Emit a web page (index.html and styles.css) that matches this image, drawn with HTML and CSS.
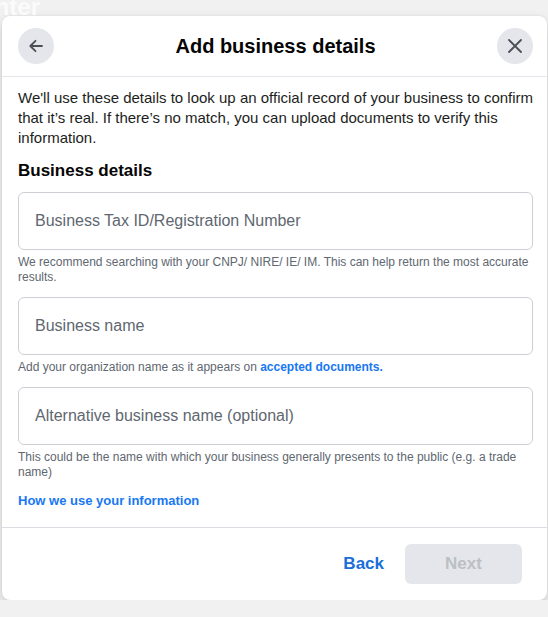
FILE: index.html
```html
<!DOCTYPE html>
<html lang="en">
<head>
    <meta charset="UTF-8">
    <meta name="viewport" content="width=device-width, initial-scale=1.0">
    <title>Add business details</title>
    <link rel="stylesheet" href="styles.css">
</head>
<body>
    <div class="backdrop-title">Center</div>

    <div class="dialog">
        <div class="dialog-header">
            <button class="icon-button" aria-label="Back">
                <svg width="20" height="20" viewBox="0 0 20 20">
                    <path d="M16 10H4.5M9.5 4.8L4.3 10l5.2 5.2" fill="none" stroke="#4b4f56" stroke-width="1.8" stroke-linecap="round" stroke-linejoin="round"/>
                </svg>
            </button>
            <h1>Add business details</h1>
            <button class="icon-button" aria-label="Close">
                <svg width="20" height="20" viewBox="0 0 20 20">
                    <path d="M4 4l12 12M16 4L4 16" fill="none" stroke="#4b4f56" stroke-width="1.8" stroke-linecap="round"/>
                </svg>
            </button>
        </div>

        <div class="dialog-body">
            <p class="intro">We'll use these details to look up an official record of your business to confirm that it’s real. If there’s no match, you can upload documents to verify this information.</p>

            <h2>Business details</h2>

            <div class="field">
                <input class="text-input" type="text" placeholder="Business Tax ID/Registration Number">
                <p class="hint">We recommend searching with your CNPJ/ NIRE/ IE/ IM. This can help return the most accurate results.</p>
            </div>

            <div class="field">
                <input class="text-input" type="text" placeholder="Business name">
                <p class="hint">Add your organization name as it appears on <a href="#" class="link">accepted documents.</a></p>
            </div>

            <div class="field">
                <input class="text-input" type="text" placeholder="Alternative business name (optional)">
                <p class="hint">This could be the name with which your business generally presents to the public (e.g. a trade name)</p>
            </div>

            <a href="#" class="link info-link">How we use your information</a>
        </div>

        <div class="dialog-footer">
            <button class="text-button">Back</button>
            <button class="primary-button" disabled>Next</button>
        </div>
    </div>
</body>
</html>
```

FILE: styles.css
```css
body {
    margin: 0;
    font-family: "Liberation Sans", Arial, Helvetica, sans-serif;
    background-color: #f1f1f1;
    color: #1c1e21;
    overflow: hidden;
}
.backdrop-title {
    height: 16px;
    line-height: 14px;
    font-size: 24px;
    font-weight: bold;
    color: #fbfbfb;
    text-indent: -36px;
    overflow: hidden;
}
.dialog {
    margin-left: 2px;
    width: 545px;
    background-color: white;
    border-radius: 8px;
    box-shadow: 0 6px 14px rgba(0, 0, 0, 0.15), 0 0 2px rgba(0, 0, 0, 0.1);
}
.dialog-header {
    display: flex;
    align-items: center;
    justify-content: space-between;
    height: 60px;
    padding: 0 14px 0 16px;
    border-bottom: 1px solid #e4e6eb;
}
.dialog-header h1 {
    margin: 0;
    font-size: 20px;
    font-weight: bold;
    color: #050505;
}
.icon-button {
    display: flex;
    align-items: center;
    justify-content: center;
    width: 36px;
    height: 36px;
    padding: 0;
    border: none;
    border-radius: 50%;
    background-color: #e4e6eb;
    cursor: pointer;
}
.dialog-body {
    padding: 11px 14px 18px 16px;
}
.intro {
    margin: 0 -6px 0 0;
    font-size: 15px;
    line-height: 20px;
    color: #1c1e21;
}
.dialog-body h2 {
    margin: 12px 0 10px;
    font-size: 17px;
    line-height: 22px;
    font-weight: bold;
    color: #050505;
}
.field {
    margin-bottom: 12px;
}
.field:last-of-type {
    margin-bottom: 11px;
}
.text-input {
    display: block;
    box-sizing: border-box;
    width: 100%;
    height: 58px;
    padding: 0 16px;
    border: 1px solid #ccd0d5;
    border-radius: 6px;
    font-family: inherit;
    font-size: 16px;
    color: #1c1e21;
    outline: none;
}
.text-input::placeholder {
    color: #606770;
}
.hint {
    margin: 5px 0 0;
    font-size: 12px;
    line-height: 15px;
    color: #606770;
}
.link {
    color: #1877f2;
    font-weight: bold;
    text-decoration: none;
}
.info-link {
    display: inline-block;
    font-size: 13px;
    line-height: 16px;
}
.dialog-footer {
    display: flex;
    justify-content: flex-end;
    align-items: center;
    gap: 21px;
    height: 72px;
    padding: 0 25px 0 16px;
    border-top: 1px solid #dadde1;
}
.text-button {
    padding: 0;
    border: none;
    background: none;
    font-family: inherit;
    font-size: 17px;
    font-weight: bold;
    color: #1a6ed8;
    cursor: pointer;
}
.primary-button {
    width: 117px;
    height: 40px;
    border: none;
    border-radius: 6px;
    background-color: #1b74e4;
    color: white;
    font-family: inherit;
    font-size: 17px;
    font-weight: bold;
    cursor: pointer;
}
.primary-button:disabled {
    background-color: #e4e6eb;
    color: #bcc0c4;
    cursor: not-allowed;
}
```
